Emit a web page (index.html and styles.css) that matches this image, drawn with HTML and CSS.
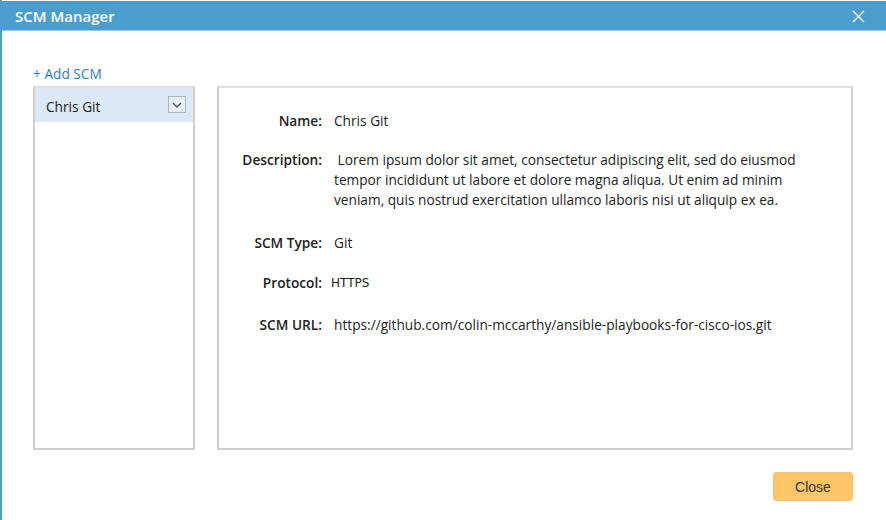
FILE: index.html
```html
<!DOCTYPE html>
<html lang="en">
<head>
    <meta charset="UTF-8">
    <meta name="viewport" content="width=device-width, initial-scale=1.0">
    <title>SCM Manager</title>
    <link rel="stylesheet" href="styles.css">
</head>
<body>
    <div class="dialog">
        <!-- title bar -->
        <div class="dialog-header">
            <span class="dialog-title">SCM Manager</span>
            <span class="dialog-close">
                <svg width="13" height="13" viewBox="0 0 13 13"><path d="M1 1 L12 12 M12 1 L1 12" stroke="#fff" stroke-width="1.4" fill="none"/></svg>
            </span>
        </div>
        <div class="dialog-body">
            <a class="add-link" href="#">+ Add SCM</a>
            <div class="columns">
                <!-- scm list -->
                <div class="scm-list">
                    <div class="scm-item selected">
                        <span>Chris Git</span>
                        <span class="item-menu">
                            <svg width="10" height="6" viewBox="0 0 10 6"><path d="M1 1 L5 5 L9 1" stroke="#555" stroke-width="1.4" fill="none"/></svg>
                        </span>
                    </div>
                </div>
                <!-- details -->
                <div class="scm-detail">
                    <div class="detail-row">
                        <div class="label">Name:</div>
                        <div class="value">Chris Git</div>
                    </div>
                    <div class="detail-row desc">
                        <div class="label">Description:</div>
                        <div class="value">&nbsp;Lorem ipsum dolor sit amet, consectetur adipiscing elit, sed do eiusmod tempor incididunt ut labore et dolore magna aliqua. Ut enim ad minim veniam, quis nostrud exercitation ullamco laboris nisi ut aliquip ex ea.</div>
                    </div>
                    <div class="detail-row type">
                        <div class="label">SCM Type:</div>
                        <div class="value">Git</div>
                    </div>
                    <div class="detail-row">
                        <div class="label">Protocol:</div>
                        <div class="value protocol">HTTPS</div>
                    </div>
                    <div class="detail-row url">
                        <div class="label">SCM URL:</div>
                        <div class="value">https://github.com/colin-mccarthy/ansible-playbooks-for-cisco-ios.git</div>
                    </div>
                </div>
            </div>
            <div class="dialog-footer">
                <button class="btn-close">Close</button>
            </div>
        </div>
    </div>
</body>
</html>
```

FILE: styles.css
```css
/* page */
body, html {
    margin: 0;
    padding: 0;
    height: 100%;
    background: #fff;
    font-family: "Open Sans", Arial, sans-serif;
    overflow: hidden;
}
.dialog {
    height: 520px;
    box-sizing: border-box;
    border-left: 2px solid #4a9cd0;
    padding-top: 1px;
}
/* title bar */
.dialog-header {
    height: 29px;
    background: #4b9dcd;
    border-bottom: 1px solid #9cc8e6;
    display: flex;
    align-items: center;
    justify-content: space-between;
    padding: 0 21px 0 13px;
}
.dialog-title {
    color: #fff;
    font-size: 15px;
    font-weight: 600;
}
.dialog-close {
    display: flex;
    margin-top: 1px;
}
/* body */
.dialog-body {
    padding: 34px 33px 0 31px;
}
.add-link {
    display: block;
    color: #2a7fc1;
    font-size: 13.7px;
    line-height: 18px;
    text-decoration: none;
    margin-bottom: 3px;
}
.columns {
    display: flex;
    gap: 22px;
    height: 364px;
}
.scm-list {
    width: 162px;
    box-sizing: border-box;
    border: 2px solid #cfcfcf;
    border-top-color: #dedede;
}
.scm-item {
    height: 34px;
    display: flex;
    align-items: center;
    justify-content: space-between;
    padding: 0 7px 0 11px;
    font-size: 13.7px;
    color: #222;
}
.scm-item span:first-child {
    margin-top: 2px;
}
.scm-item.selected {
    background: #dbe8f7;
}
.item-menu {
    width: 16px;
    height: 15px;
    border: 1px solid #aab4c2;
    background: #e6eef8;
    display: flex;
    align-items: center;
    justify-content: center;
    margin-top: -1px;
}
.scm-detail {
    width: 636px;
    box-sizing: border-box;
    border: 2px solid #cfcfcf;
    border-top-color: #dedede;
    padding-top: 23px;
    font-size: 13.7px;
    line-height: 20px;
    color: #222;
}
.detail-row {
    display: flex;
    gap: 12px;
    margin-bottom: 20px;
}
.detail-row:first-child {
    margin-bottom: 19px;
}
.detail-row.desc {
    margin-bottom: 23px;
}
.detail-row.type + .detail-row {
    margin-bottom: 22px;
}
.label {
    width: 103px;
    flex-shrink: 0;
    text-align: right;
    font-weight: 600;
}
.value {
    width: 480px;
}
.value.protocol {
    font-family: "DejaVu Sans", Verdana, sans-serif;
    font-size: 12px;
    margin-left: -3px;
}
/* footer */
.dialog-footer {
    display: flex;
    justify-content: flex-end;
    padding-top: 22px;
}
.btn-close {
    width: 80px;
    height: 29px;
    background: #fdc666;
    border: 1px solid #f3c27a;
    border-radius: 3px;
    font-family: "Liberation Sans", Arial, sans-serif;
    font-size: 14px;
    color: #333;
}
```
